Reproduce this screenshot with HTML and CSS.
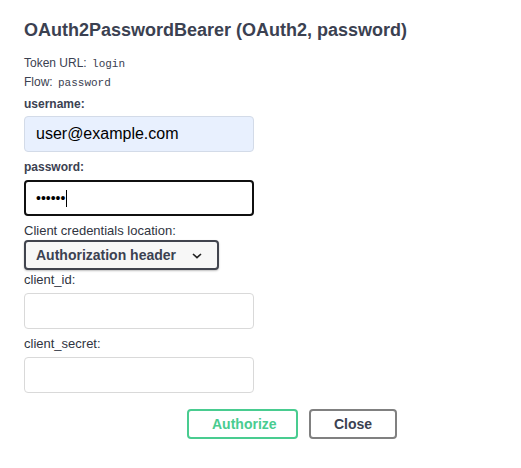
FILE: index.html
```html
<!DOCTYPE html>
<html lang="en">
<head>
<meta charset="utf-8">
<title>OAuth2PasswordBearer</title>
<link rel="stylesheet" href="styles.css">
</head>
<body>
<div class="auth">
  <h4 class="title">OAuth2PasswordBearer (OAuth2, password)</h4>
  <p class="info info-first">Token URL: <code class="code">login</code></p>
  <p class="info">Flow: <code class="code">password</code></p>

  <label class="lbl lbl-user" for="username">username:</label>
  <input class="field field-autofill" id="username" type="text" value="user@example.com">

  <label class="lbl lbl-pass" for="password">password:</label>
  <div class="field field-focus"><span class="dots">••••••</span><span class="caret"></span></div>

  <label class="lbl2 lbl-loc">Client credentials location:</label>
  <div class="select">
    <span class="select-text">Authorization header</span>
    <svg class="chev" width="10" height="6" viewBox="0 0 10 6"><path d="M1 1 L5 4.6 L9 1" fill="none" stroke="#222" stroke-width="1.6"/></svg>
  </div>

  <label class="lbl2 lbl-id" for="cid">client_id:</label>
  <input class="field" id="cid" type="text">

  <label class="lbl2 lbl-secret" for="csecret">client_secret:</label>
  <input class="field" id="csecret" type="text">

  <div class="btns">
    <button class="btn btn-auth" type="button">Authorize</button>
    <button class="btn btn-close" type="button">Close</button>
  </div>
</div>
</body>
</html>
```

FILE: styles.css
```css
html, body {
  margin: 0;
  padding: 0;
  background: #ffffff;
}
body {
  font-family: "Liberation Sans", Arial, sans-serif;
  color: #3b4151;
}
.auth {
  padding: 19px 24px 0 24px;
  display: flex;
  flex-direction: column;
  align-items: flex-start;
}
.title {
  margin: 0;
  font-size: 18px;
  line-height: 22px;
  font-weight: 700;
  color: #3b4151;
}
.info {
  margin: 0;
  font-size: 12px;
  line-height: 18px;
  color: #3b4151;
}
.info-first {
  margin-top: 13px;
}
.code {
  font-family: "Liberation Mono", "DejaVu Sans Mono", monospace;
  font-size: 11px;
  color: #3b4151;
  padding: 0 2px;
}
.lbl {
  display: block;
  font-size: 12px;
  line-height: 18px;
  font-weight: 700;
  color: #3b4151;
}
.lbl2 {
  display: block;
  font-size: 13px;
  line-height: 18px;
  font-weight: 400;
  color: #2f3441;
}
.lbl-user { margin-top: 3px; }
.lbl-pass { margin-top: 6px; }
.lbl-loc { margin-top: 6px; }
.lbl-id { margin-top: 1px; }
.lbl-secret { margin-top: 6px; }

.field {
  box-sizing: border-box;
  width: 230px;
  height: 36px;
  margin: 4px 0 0 0;
  padding: 0 10px;
  border: 1px solid #d9d9d9;
  border-radius: 4px;
  background: #ffffff;
  font-family: "Liberation Sans", Arial, sans-serif;
  font-size: 16px;
  color: #000000;
  outline: none;
}
.lbl-user + .field { margin-top: 3px; }
.field-autofill {
  background: #e8f0fe;
  border-color: #d3dbe8;
  padding-left: 11px;
}
.field-focus {
  display: flex;
  align-items: center;
  border: 2px solid #101010;
  padding: 0 10px;
}
.dots {
  font-size: 14px;
  letter-spacing: 0;
  color: #000;
}
.caret {
  width: 1px;
  height: 17px;
  background: #000;
  margin-left: 1px;
}
.select {
  box-sizing: border-box;
  width: 195px;
  height: 30px;
  display: flex;
  align-items: center;
  gap: 16px;
  padding: 0 10px;
  border: 2px solid #41444e;
  border-radius: 4px;
  background: #f7f7f7;
  box-shadow: 0 1px 2px 0 rgba(0, 0, 0, 0.25);
}
.select-text {
  font-size: 14px;
  font-weight: 700;
  color: #3b4151;
  white-space: nowrap;
}
.chev {
  flex: none;
  margin-top: 1px;
}
.btns {
  display: flex;
  gap: 11px;
  margin-top: 16px;
  padding-left: 163px;
}
.btn {
  box-sizing: border-box;
  height: 30px;
  padding: 0 23px;
  border-radius: 4px;
  background: transparent;
  font-family: "Liberation Sans", Arial, sans-serif;
  font-size: 14px;
  font-weight: 700;
  cursor: pointer;
}
.btn-auth {
  width: 111px;
  border: 2px solid #49cc90;
  color: #49cc90;
}
.btn-close {
  width: 88px;
  border: 2px solid #808080;
  color: #3b4151;
}
```
